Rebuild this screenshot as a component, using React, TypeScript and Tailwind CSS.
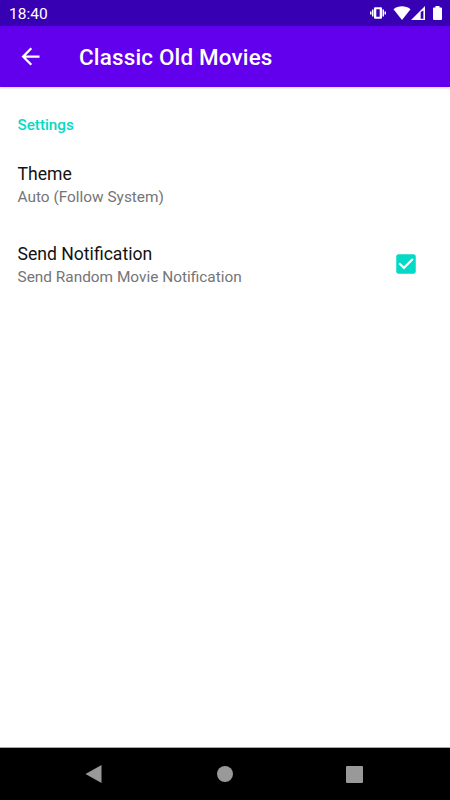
import React from 'react';

const StatusBar = () => (
  <div className="flex h-[26px] shrink-0 items-center justify-between bg-[#3700b3] pl-[9px] pr-2 text-white">
    <span className="pt-[2px] text-[15.5px] leading-5">18:40</span>
    <div className="flex items-center">
      {/* Vibrate */}
      <svg className="mr-[7px] h-4 w-4" viewBox="0 0 16 16" fill="currentColor">
        <path fillRule="evenodd" d="M5 2.300h6q1 0 1 1v9.400q0 1-1 1H5q-1 0-1-1V3.300q0-1 1-1zM6.300 4.200v7.600h3.400V4.200z" />
        <path d="M2 4.500h1.500v7H2zM0 6.500h1.500v3H0zM12.500 4.500H14v7h-1.500zM14.500 6.500H16v3h-1.500z" />
      </svg>
      {/* Wifi */}
      <svg className="h-[14px] w-[18px]" viewBox="0 0 18 14" fill="currentColor">
        <path d="M9 14L0.500 3.200C5.500-.6 12.500-.6 17.500 3.200z" />
      </svg>
      {/* Signal */}
      <svg className="mr-2 h-[14px] w-[14px]" viewBox="0 0 14 14" fill="currentColor">
        <path fillRule="evenodd" d="M0 14L14 0v14zM9.700 6v6.700h2.700V4.500z" />
      </svg>
      {/* Battery */}
      <svg className="h-[14px] w-[9px]" viewBox="0 0 9 14" fill="currentColor">
        <path d="M2.500 0h4v1.500H8q1 0 1 1V13q0 1-1 1H1q-1 0-1-1V2.500q0-1 1-1h1.500z" />
      </svg>
    </div>
  </div>
);

const AppBar = () => (
  <header className="relative z-10 flex h-[61px] shrink-0 items-center bg-[#6200ee] pl-[17px] text-white shadow-[0_1px_2px_rgba(0,0,0,0.2)]">
    <svg className="h-[27px] w-[27px]" viewBox="0 0 24 24" fill="currentColor">
      <path d="M20 11H7.830l5.590-5.590L12 4l-8 8 8 8 1.410-1.410L7.830 13H20v-2z" />
    </svg>
    <h1 className="ml-[35px] pt-[3px] text-[22.4px] font-medium tracking-[0.19px]">Classic Old Movies</h1>
  </header>
);

const Preference = ({ title, summary, checked }: { title: string; summary: string; checked?: boolean }) => (
  <div className="flex h-20 items-center justify-between pr-[31px]">
    <div className="pt-[2px]">
      <div className="text-[17.6px] leading-[23px] text-[#121212]">{title}</div>
      <div className="text-[15.4px] leading-[22px] text-[#757575]">{summary}</div>
    </div>
    {checked && (
      <svg className="h-[26px] w-[26px]" viewBox="0 0 24 24" fill="#03dac5">
        <path d="M19 3H5c-1.110 0-2 .9-2 2v14c0 1.100.89 2 2 2h14c1.110 0 2-.9 2-2V5c0-1.100-.89-2-2-2zm-9 14l-5-5 1.410-1.410L10 14.170l7.590-7.590L19 8l-9 9z" />
      </svg>
    )}
  </div>
);

const App = () => (
  <div className="flex h-[800px] w-[450px] flex-col overflow-hidden bg-white font-[Roboto,sans-serif]">
    <StatusBar />
    <AppBar />
    <main className="flex-1 pl-[17.5px] pt-7">
      <h2 className="mb-[9px] text-[15.2px] leading-5 font-medium text-[#03dac5]">Settings</h2>
      <Preference title="Theme" summary="Auto (Follow System)" />
      <Preference title="Send Notification" summary="Send Random Movie Notification" checked />
    </main>
    <nav className="flex h-[53px] shrink-0 items-center justify-between border-t border-[#a8a8a8] bg-black pl-[85px] pr-[87px]">
      <svg className="h-[18px] w-[17px]" viewBox="0 0 17 18" fill="#999999">
        <path d="M0.500 9L16.500 0v18z" />
      </svg>
      <div className="ml-[2px] h-4 w-4 rounded-full bg-[#999999]" />
      <div className="h-[17px] w-[17px] rounded-[1px] bg-[#999999]" />
    </nav>
  </div>
);

export default App;
